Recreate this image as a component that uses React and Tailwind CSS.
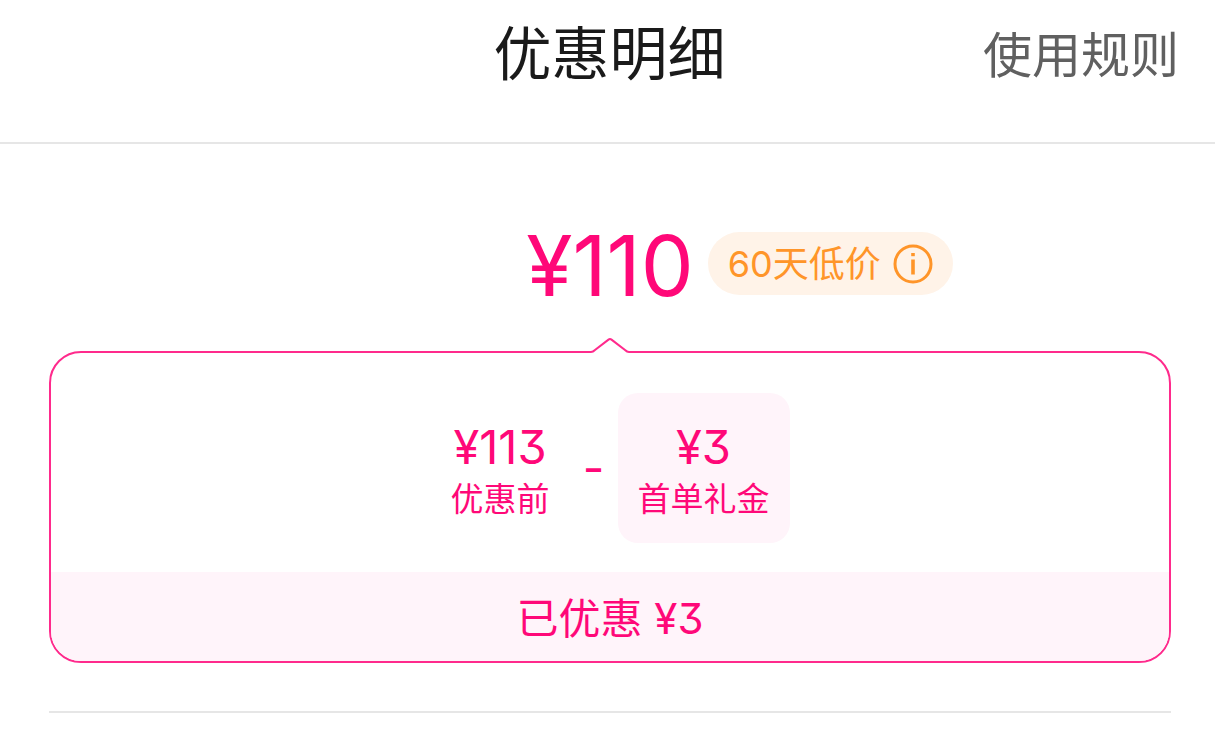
import React from 'react'

const before = { amount: '¥113', label: '优惠前' }
const discount = { amount: '¥3', label: '首单礼金' }

function InfoIcon() {
  return (
    <svg viewBox="0 0 40 40" className="size-10" fill="none" stroke="currentColor" aria-hidden="true">
      <circle cx="20" cy="20" r="18" strokeWidth="3" />
      <path d="M20 15.500v15" strokeWidth="3.600" />
      <path d="M20 9v3.200" strokeWidth="3.600" />
    </svg>
  )
}

function PriceItem({ item, highlight }) {
  return (
    <div className={`flex h-[150px] flex-col items-center rounded-[20px] px-5 pt-6 ${highlight ? 'bg-[#fff4fa]' : ''}`}>
      <span className="text-[47px] leading-[60px]">{item.amount}</span>
      <span className="text-[33px] leading-[44px]">{item.label}</span>
    </div>
  )
}

export default function App() {
  return (
    <main
      lang="zh-CN"
      className='min-h-screen bg-white font-["Inter","Noto_Sans_CJK_SC",sans-serif] text-[#ff0878] [font-feature-settings:"cv09"]'
    >
      {/* Header */}
      <header className="grid h-36 grid-cols-[1fr_auto_1fr] items-start border-b-2 border-[#e6e6e6] pr-9 pl-10">
        <h1 className="col-start-2 pt-3 text-[58px] leading-[84px] text-[#1a1a1a]">优惠明细</h1>
        <button type="button" className="justify-self-end pt-[14px] text-[49px] leading-[84px] text-[#606060]">
          使用规则
        </button>
      </header>

      <div className="pr-11 pl-[49px]">
        {/* Final price */}
        <section className="grid h-[207px] grid-cols-[1fr_auto_1fr] items-start pt-[88px]">
          <p className="col-start-2 -mt-4 text-[84px] leading-[100px]">¥110</p>
          <button
            type="button"
            className="ml-[14px] flex h-[63px] items-center gap-3 justify-self-start rounded-full bg-[#fff3e8] pr-5 pl-5 text-[36px] whitespace-nowrap text-[#ff9529]"
          >
            60天低价
            <InfoIcon />
          </button>
        </section>

        {/* Breakdown */}
        <section className="relative rounded-[32px] border-2 border-[#ff2a8c]">
          <svg
            viewBox="0 0 40 16"
            className="absolute -top-4 left-1/2 h-4 w-10 -translate-x-1/2"
            fill="none"
            aria-hidden="true"
          >
            <path d="M0 13h40v3H0z" fill="#fff" />
            <path d="M0 15h1q2 0 4-2L18.500 2.600q1.500-1.200 3 0L35 13q2 2 4 2h1" stroke="#ff2a8c" strokeWidth="2" />
          </svg>
          <div className="flex justify-center pt-10 pb-[29px]">
            <PriceItem item={before} />
            <span className="w-12 text-center text-[47px] leading-[150px]">-</span>
            <PriceItem item={discount} highlight />
          </div>
          <p className="rounded-b-[30px] bg-[#fff4fa] pt-1 text-center text-[42px] leading-[85px]">已优惠 ¥3</p>
        </section>

        <hr className="mt-12 border-t-2 border-[#e6e6e6]" />
      </div>
    </main>
  )
}
